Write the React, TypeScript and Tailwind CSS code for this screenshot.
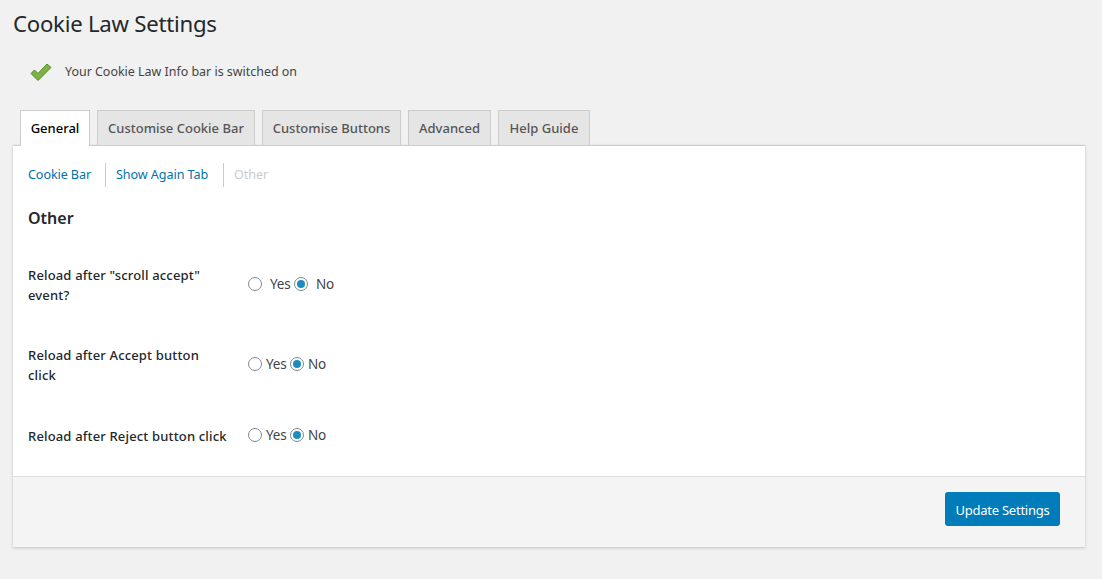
const font = "font-['Noto_Sans','Open_Sans',sans-serif]";

const tabs = [
  { label: "General", width: "w-[70px]", active: true },
  { label: "Customise Cookie Bar", width: "w-[158px]", active: false },
  { label: "Customise Buttons", width: "w-[139px]", active: false },
  { label: "Advanced", width: "w-[83px]", active: false },
  { label: "Help Guide", width: "w-[92px]", active: false },
];

const Radio = ({ checked }: { checked?: boolean }) => (
  <span className="flex h-[14px] w-[14px] shrink-0 items-center justify-center rounded-full border border-[#7e8993] bg-white">
    {checked && <span className="h-[8px] w-[8px] rounded-full bg-[#1e8cbe]" />}
  </span>
);

const YesNo = ({ wide }: { wide?: boolean }) => (
  <div className="mb-[2px] flex items-center text-[13.5px] tracking-[-0.2px] text-[#444]">
    <Radio />
    <span className={wide ? "ml-[8px] w-[24px]" : "ml-[4px] w-[24px]"}>Yes</span>
    <Radio checked />
    <span className={wide ? "ml-[8px]" : "ml-[4px]"}>No</span>
  </div>
);

const Row = ({
  lines,
  wide,
  className,
}: {
  lines: string[];
  wide?: boolean;
  className: string;
}) => (
  <div className={`flex items-center ${className}`}>
    <div className="w-[220px] whitespace-nowrap text-[13px] leading-[20px] font-medium tracking-[0.16px] text-[#23282d]">
      {lines.map((line) => (
        <div key={line}>{line}</div>
      ))}
    </div>
    <YesNo wide={wide} />
  </div>
);

export default function App() {
  return (
    <div className={`min-h-screen bg-[#f1f1f1] px-[13px] ${font}`}>
      <h1 className="pt-[9px] text-[22.2px] leading-[30px] tracking-[-0.25px] text-[#23282d]">
        Cookie Law Settings
      </h1>

      {/* Status line */}
      <div className="mt-[18px] flex h-[30px] items-center pl-[17px]">
        <svg width="22" height="18" viewBox="0 0 22 18" className="shrink-0">
          <path
            d="M1 10.5 L4.5 7 L8 10.5 L17 1 L21 4.5 L8 17.5 Z"
            fill="#7cb342"
            stroke="#4f8a2a"
            strokeWidth="1"
            strokeLinejoin="round"
          />
        </svg>
        <span className="ml-[13px] text-[12.45px] text-[#444]">
          Your Cookie Law Info bar is switched on
        </span>
      </div>

      {/* Tabs */}
      <div className="relative z-10 mt-[23px] ml-[7px] flex h-[36px] gap-[7px]">
        {tabs.map((tab) => (
          <div
            key={tab.label}
            className={`flex h-[36px] items-center justify-center border border-[#ccc] pt-[1px] text-[13px] font-medium ${tab.width} ${
              tab.active ? "border-b-0 bg-white text-black" : "bg-[#e5e5e5] text-[#555]"
            }`}
          >
            {tab.label}
          </div>
        ))}
      </div>

      {/* Panel */}
      <div className="-mt-px w-[1072px] border-t border-[#ccc] bg-white shadow-[0_1px_3px_rgba(0,0,0,0.2)]">
        <div className="h-[330px] px-[15px]">
          <div className="flex h-[57px] items-center text-[12.6px]">
            <span className="pt-[2px] tracking-[-0.1px] text-[#0073aa]">Cookie Bar</span>
            <span className="mr-[10px] ml-[14px] h-[24px] w-px bg-[#ccc]" />
            <span className="w-[93px] pt-[2px] tracking-[-0.08px] text-[#0073aa]">Show Again Tab</span>
            <span className="mr-[10px] ml-[14px] h-[24px] w-px bg-[#ccc]" />
            <span className="pt-[2px] tracking-[-0.1px] text-[#c8ced1]">Other</span>
          </div>
          <h2 className="mt-[4px] text-[16px] leading-[22px] font-semibold text-[#23282d]">Other</h2>

          <Row lines={['Reload after "scroll accept"', "event?"]} wide className="mt-[36px]" />
          <Row lines={["Reload after Accept button", "click"]} className="mt-[40px]" />
          <Row lines={["Reload after Reject button click"]} className="mt-[40px]" />
        </div>

        {/* Footer */}
        <div className="flex h-[71px] items-start justify-end border-t border-[#ddd] bg-[#f4f4f4] pt-[15px] pr-[25px]">
          <button className="h-[34px] w-[115px] rounded-[3px] bg-[#007cba] pt-[3px] text-[13px] tracking-[-0.25px] text-white">
            Update Settings
          </button>
        </div>
      </div>
    </div>
  );
}
